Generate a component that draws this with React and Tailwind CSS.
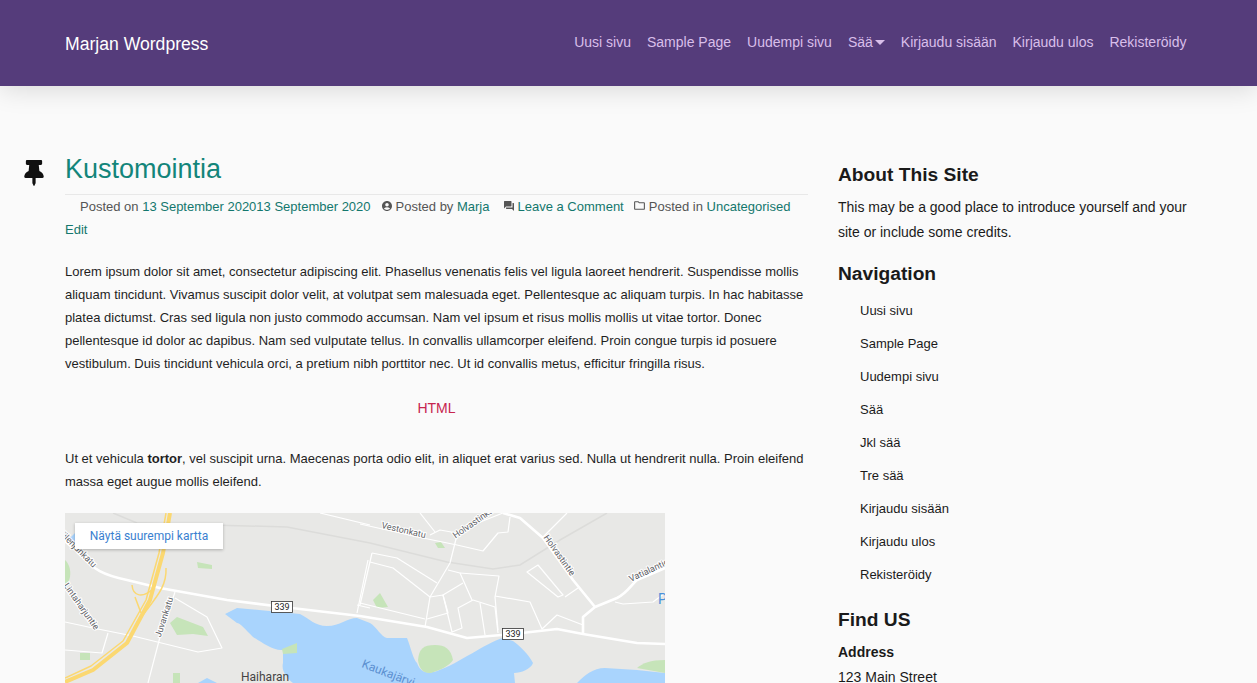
import React from 'react';
import { FaThumbtack } from 'react-icons/fa';
import { MdAccountCircle, MdForum, MdOutlineFolder } from 'react-icons/md';

const navLinks = ['Uusi sivu', 'Sample Page', 'Uudempi sivu', 'Sää', 'Kirjaudu sisään', 'Kirjaudu ulos', 'Rekisteröidy'];
const sidebarLinks = ['Uusi sivu', 'Sample Page', 'Uudempi sivu', 'Sää', 'Jkl sää', 'Tre sää', 'Kirjaudu sisään', 'Kirjaudu ulos', 'Rekisteröidy'];

const minorRoads = [
  'M0 109L28 115L68 123L133 139L157 135L142 104L110 85',
  'M110 79L95 124L83 170',
  'M43 120L37 140L0 137',
  'M303 47L292 100',
  'M292 92L305 95',
  'M255 0L305 12',
  'M295 11L358 25L392 32L418 38L433 20L443 19L445 4',
  'M307 40L295 92',
  'M307 40L332 45L372 70',
  'M305 49L328 55L365 84',
  'M295 90L360 106',
  'M362 106L383 100L378 82L398 70',
  'M365 84L378 82L387 119L397 115L393 95L408 87L430 94L433 120',
  'M415 90L420 122',
  'M383 57L395 60L407 87',
  'M395 60L434 63L430 84L433 117',
  'M430 83L465 89L477 116L492 102L518 112',
  'M462 59L473 52L498 82L493 84Z',
  'M500 84L513 75',
  'M502 0L478 24',
  'M365 22L375 17L392 20',
  'M355 0L370 19',
  'M550 89L558 91L588 89L600 80',
  'M392 22L385 50L365 84L360 114',
  'M392 22L395 17L438 0',
];

const majorRoads = [
  'M0 28L18 44C28 56 38 62 62 67L95 75L162 87L218 94L295 103L362 114L402 125L448 121L492 116L518 121L572 130L600 131',
  'M438 0L455 5L478 25L508 67L530 94L518 104L518 120',
  'M530 94L552 85C562 80 566 72 572 67L600 55',
];

function MapDrawing() {
  return (
    <svg viewBox="0 0 600 170" className="block h-[170px] w-[600px]" fontFamily="Roboto, sans-serif">
      <rect width="600" height="170" fill="#e8e8e6" />
      {/* water */}
      <g fill="#a9d4fd">
        <path d="M160 101L172 95L235 101C245 106 250 113 262 113C275 113 282 105 292 105L305 110C312 114 316 124 322 125L342 125C346 135 348 146 352 150C356 160 362 161 372 158C395 150 420 130 438 125L448 128C456 134 464 142 468 150C466 156 456 160 449 160L450 170L228 170C222 165 216 158 218 150L218 137C208 138 198 130 188 124C180 116 175 110 172 110Z" />
        <path d="M133 170L142 165L152 170Z" />
        <path d="M512 170C520 162 528 155 540 155L572 157L600 160L600 170Z" />
        <path d="M3 27L10 20L16 28L8 33Z" />
      </g>
      {/* parks */}
      <g fill="#c6e4b9">
        <path d="M353 147C354 136 358 132 370 132C380 132 386 136 388 147C384 153 375 157 366 160C358 161 354 155 353 147Z" />
        <path d="M572 155C578 150 585 147 600 147L600 160Z" />
        <path d="M308 87L315 80L323 94L312 95Z" />
        <path d="M370 30L376 29L380 35L373 35Z" />
        <path d="M132 49L147 52L147 56L133 55Z" />
        <path d="M0 47C6 52 8 66 0 73Z" />
        <path d="M105 110L112 104L138 114L143 123L128 121L112 122Z" />
        <path d="M15 140L25 140L25 147L15 147Z" />
        <path d="M108 160L115 160L115 170L108 170Z" />
        <path d="M217 136L232 130L232 140L218 141Z" />
      </g>
      {/* railway */}
      <path d="M48 0L72 10L222 14L305 30L382 49L428 56L455 52L495 27L542 0" fill="none" stroke="#dcdcda" strokeWidth="1.5" />
      <g fill="none" stroke="#fff" strokeLinejoin="round">
        {minorRoads.map((d, i) => (
          <path key={i} d={d} strokeWidth="1.2" />
        ))}
        {majorRoads.map((d, i) => (
          <path key={i} d={d} strokeWidth="2.6" />
        ))}
      </g>
      {/* motorway and its interchange */}
      <g fill="none" stroke="#fbd871" strokeLinejoin="round">
        <path d="M105 0L98 40L85 87L62 130L28 157L0 169" strokeWidth="4" />
        <path d="M101 0L94 40L81 87L58 128L26 153L0 165" strokeWidth="1.5" />
        <path d="M67 72C68 84 78 85 88 76" strokeWidth="1.5" />
        <path d="M101 55C102 75 90 85 72 110" strokeWidth="1.5" />
        <path d="M70 84L76 100" strokeWidth="1.5" />
      </g>
      <g fontSize="9" fill="#5f6368" stroke="#fff" strokeWidth="2" paintOrder="stroke">
        <text transform="translate(338 20) rotate(13)" textAnchor="middle">Vestonkatu</text>
        <text transform="translate(413 10) rotate(-35)" textAnchor="middle">Holvastinkatu</text>
        <text transform="translate(492 44) rotate(55)" textAnchor="middle">Holvastintie</text>
        <text transform="translate(585 60) rotate(-25)" textAnchor="middle">Vatialantie</text>
        <text transform="translate(102 105) rotate(-72)" textAnchor="middle">Juvankatu</text>
        <text transform="translate(10 37) rotate(45)" textAnchor="middle">Tiilenjänkatu</text>
        <text transform="translate(14 95) rotate(55)" textAnchor="middle">Lintaharjuntie</text>
      </g>
      <text x="176" y="168" fontSize="12" fill="#444">Haiharan</text>
      <text transform="translate(296 154) rotate(21)" fontSize="12" fill="#5b8fd0">Kaukajärvi</text>
      <text x="593" y="91" fontSize="14" fill="#4a90d9">P</text>
      {[[217, 94], [448, 121]].map(([x, y]) => (
        <g key={x}>
          <rect x={x - 10.5} y={y - 5.5} width="21" height="11" fill="#fff" stroke="#333" strokeWidth="0.8" />
          <text x={x} y={y + 3} fontSize="9" fill="#222" textAnchor="middle">339</text>
        </g>
      ))}
    </svg>
  );
}

function Link({ children }) {
  return <a className="text-[#13776d]">{children}</a>;
}

export default function App() {
  return (
    <div className="h-[683px] overflow-hidden bg-[#fafafa] font-['Liberation_Sans',Arial,sans-serif] text-[#1a1a1a]">
      <header className="flex h-[86px] items-start justify-between bg-[#553c7b] pl-[65px] pr-[70.5px] pt-[33px] shadow-[0_4px_24px_rgba(0,0,0,0.13)]">
        <a className="text-[17.6px] leading-[22px] text-white">Marjan Wordpress</a>
        <nav className="flex gap-[16px] text-[14px] leading-[18px] text-[#d9bfea]">
          {navLinks.map((link) => (
            <a key={link} className="flex items-center">
              {link}
              {link === 'Sää' && (
                <span className="ml-[2px] mt-[1px] border-x-[5px] border-t-[5px] border-x-transparent border-t-[#d9bfea]" />
              )}
            </a>
          ))}
        </nav>
      </header>

      <main className="flex pt-[66px]">
        <div className="w-[65px] shrink-0 pl-[24px] pt-[8px]">
          <FaThumbtack className="h-[26px] w-[20px] text-[#111]" />
        </div>

        <article className="w-[743px] shrink-0">
          <h1 className="pt-[1px] text-[27px] font-normal leading-[33px] text-[#13857a]">Kustomointia</h1>
          <div className="mt-[8px] border-t border-[#e8e8e8] text-[13px] leading-[23px] text-[#555]">
            <span className="ml-[15px]">Posted on </span>
            <Link>13 September 202013 September 2020</Link>
            <MdAccountCircle className="ml-[10px] mr-[3px] inline h-[12px] w-[12px] align-[-1px]" />
            <span>Posted by </span>
            <Link>Marja</Link>
            <MdForum className="ml-[13px] mr-[3px] inline h-[12px] w-[12px] align-[-1px]" />
            <Link>Leave a Comment</Link>
            <MdOutlineFolder className="ml-[9px] mr-[3px] inline h-[13px] w-[13px] align-[-1px]" />
            <span>Posted in </span>
            <Link>Uncategorised</Link>
            <br />
            <Link>Edit</Link>
          </div>

          <p className="mt-[19px] text-[13px] leading-[23px] text-[#1f1f1f]">
            Lorem ipsum dolor sit amet, consectetur adipiscing elit. Phasellus venenatis felis vel ligula laoreet hendrerit. Suspendisse mollis aliquam tincidunt. Vivamus suscipit dolor velit, at volutpat sem malesuada eget. Pellentesque ac aliquam turpis. In hac habitasse platea dictumst. Cras sed ligula non justo commodo accumsan. Nam vel ipsum et risus mollis mollis ut vitae tortor. Donec pellentesque id dolor ac dapibus. Nam sed vulputate tellus. In convallis ullamcorper eleifend. Proin congue turpis id posuere vestibulum. Duis tincidunt vehicula orci, a pretium nibh porttitor nec. Ut id convallis metus, efficitur fringilla risus.
          </p>
          <p className="mt-[22px] text-center text-[14px] leading-[23px] text-[#c7254e]">HTML</p>
          <p className="mt-[27px] text-[13px] leading-[23px] text-[#1f1f1f]">
            Ut et vehicula <strong>tortor</strong>, vel suscipit urna. Maecenas porta odio elit, in aliquet erat varius sed. Nulla ut hendrerit nulla. Proin eleifend massa eget augue mollis eleifend.
          </p>

          <div className="relative mt-[20px] w-[600px]">
            <MapDrawing />
            <a className="absolute left-[10px] top-[10px] flex h-[26px] w-[148px] items-center justify-center bg-white font-['Roboto',sans-serif] text-[12px] text-[#3a7fd0] shadow-[0_1px_3px_rgba(0,0,0,0.25)]">
              Näytä suurempi kartta
            </a>
          </div>
        </article>

        <aside className="ml-[30px] w-[354px] shrink-0 pt-[12px]">
          <h2 className="text-[19.2px] font-bold leading-[22px]">About This Site</h2>
          <p className="mt-[9px] text-[14px] leading-[25px]">
            This may be a good place to introduce yourself and your site or include some credits.
          </p>
          <h2 className="mt-[18px] text-[19.2px] font-bold leading-[22px]">Navigation</h2>
          <ul className="mt-[9px] pl-[22px] text-[13px] leading-[33px]">
            {sidebarLinks.map((link, i) => (
              <li key={i}>{link}</li>
            ))}
          </ul>
          <h2 className="mt-[18px] text-[19.2px] font-bold leading-[22px]">Find US</h2>
          <p className="mt-[9px] text-[14px] font-bold leading-[25px]">Address</p>
          <p className="text-[14px] leading-[25px]">123 Main Street</p>
        </aside>
      </main>
    </div>
  );
}
